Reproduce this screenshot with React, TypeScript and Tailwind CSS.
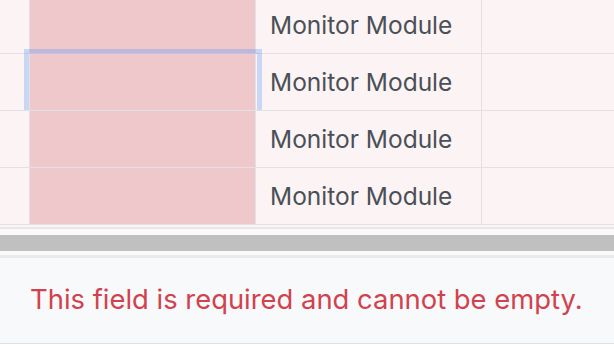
import React from "react";

const rows = [0, 1, 2, 3];

function Row({ selected }: { selected?: boolean }) {
  return (
    <div className="relative flex h-[57px] border-b border-[#e3e1e8] bg-[#fcf3f4]">
      <div className="w-[30px] shrink-0 border-r border-[#e3e1e8]" />
      <div className="w-[226px] shrink-0 border-r border-[#e3e1e8] bg-[#efc8cc]" />
      <div className="w-[226px] shrink-0 border-r border-[#e3e1e8] flex items-center pl-[14px] text-[24.5px] text-[#4a5057]">
        Monitor Module
      </div>
      <div className="flex-1" />
      {selected && (
        <div className="pointer-events-none absolute left-[24px] top-[-5px] h-[61px] w-[238px] border-[5px] border-b-0 border-[rgba(59,130,246,0.26)]" />
      )}
    </div>
  );
}

export default function App() {
  return (
    <div
      className="h-[356px] w-[614px] overflow-hidden bg-white"
      style={{ fontFamily: "Inter, 'Noto Sans', sans-serif" }}
    >
      <div className="-mt-[3px]">
        {rows.map(i => (
          <Row key={i} selected={i === 1} />
        ))}
      </div>
      <div className="h-[2px] bg-[#fcf3f4]" />
      <div className="h-[2px] bg-[#e6e6e9]" />
      <div className="h-[6px] bg-[#fafafa]" />
      <div className="h-[16px] bg-[#c0c0c0]" />
      <div className="h-[4px] bg-[#fafafa]" />
      <div className="h-[3px] bg-[#e9eaec]" />
      <div className="flex h-[86px] items-center border-b border-[#dfe1e4] bg-[#f8f9fb] pl-[30px] pb-[2px] text-[27.4px] text-[#d0434e]">
        This field is required and cannot be empty.
      </div>
    </div>
  );
}
